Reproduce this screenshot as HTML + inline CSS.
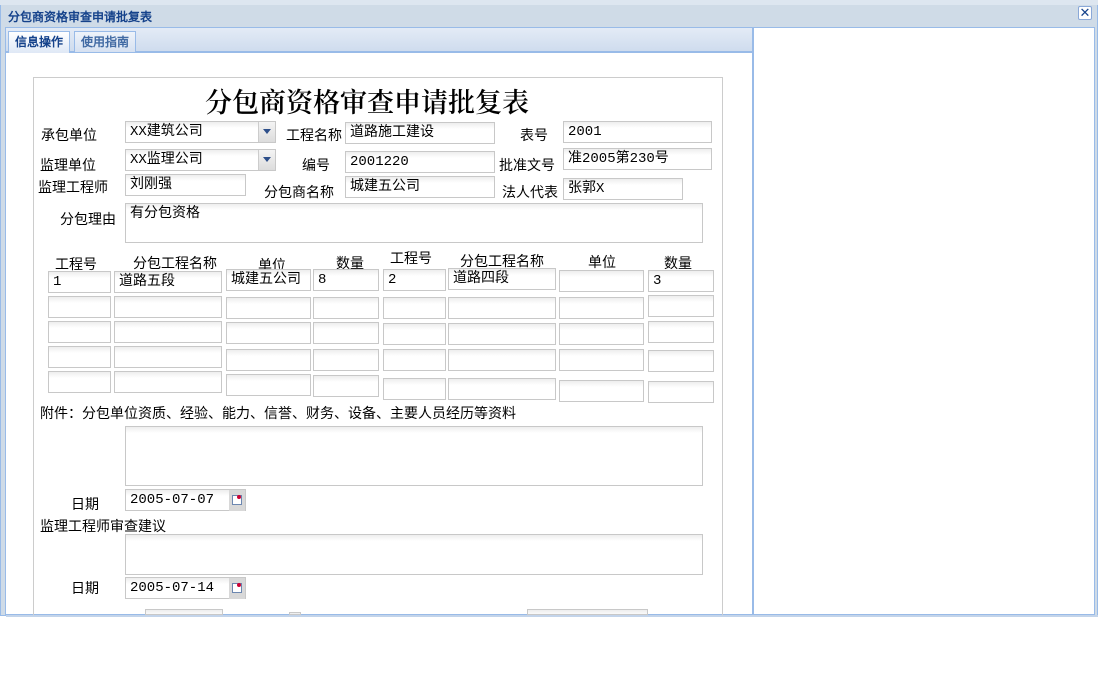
<!DOCTYPE html><html><head><meta charset="utf-8"><style>
*{margin:0;padding:0;box-sizing:border-box}
body{width:1098px;height:687px;background:#fff;position:relative;overflow:hidden;font-family:"Liberation Sans","WenQuanYi Zen Hei",sans-serif;font-size:14px;color:#000}
.a{position:absolute;white-space:nowrap}
.in{position:absolute;border:1px solid #c8c8c8;background:linear-gradient(#eee,#fff 6px);height:22px;padding:2px 4px;font-size:14px;line-height:16px;font-family:"Liberation Mono","WenQuanYi Zen Hei",monospace}
.sel:after{content:"";position:absolute;right:0;top:0;width:16px;height:20px;background:linear-gradient(#f4f4f4,#dcdcdc);border-left:1px solid #ccc}
.arr{position:absolute;right:4px;top:7px;width:0;height:0;border-left:4px solid transparent;border-right:4px solid transparent;border-top:5px solid #2d4f8a;z-index:2}
.cal{position:absolute;right:0;top:0;width:16px;height:21px;background:#d8d8d8}
.cal i{position:absolute;left:3px;top:5px;width:10px;height:10px;border:1px solid #6c87b0;background:#fff}
.cal b{position:absolute;right:4px;top:5px;width:4px;height:4px;border-radius:50%;background:#c03}
</style></head><body>
<div class="a" style="left:0;top:0;width:1098px;height:616px;background:#cfdbe7;border:1px solid #99bbe8"></div>
<div class="a" style="left:0;top:0;width:1098px;height:5px;background:#dde6f0"></div>
<div class="a" style="left:8px;top:8px;font-size:12px;font-weight:bold;color:#15428b">分包商资格审查申请批复表</div>
<div class="a" style="left:1078px;top:6px;width:14px;height:14px;border:1px solid #8aa8d8;background:#fff;border-radius:2px;color:#15428b;font-size:13px;line-height:11px;text-align:center">✕</div>
<div class="a" style="left:5px;top:27px;width:748px;height:588px;background:#fff;border:1px solid #99bbe8"></div>
<div class="a" style="left:6px;top:28px;width:746px;height:25px;background:linear-gradient(#e3ebf6,#cfdcee);border-bottom:2px solid #99bbe8"></div>
<div class="a" style="left:8px;top:31px;width:62px;height:22px;background:linear-gradient(#fff,#dfe8f6);border:1px solid #99bbe8;border-bottom:none;font-size:12px;font-weight:bold;color:#15428b;text-align:center;line-height:20px">信息操作</div>
<div class="a" style="left:74px;top:31px;width:62px;height:21px;background:linear-gradient(#eef3fa,#d6e1f1);border:1px solid #99bbe8;border-bottom:none;font-size:12px;font-weight:bold;color:#416aa3;text-align:center;line-height:20px">使用指南</div>
<div class="a" style="left:753px;top:27px;width:342px;height:588px;background:#fff;border:1px solid #99bbe8"></div>
<div class="a" style="left:33px;top:77px;width:690px;height:540px;border:1px solid #ccc;border-bottom:none"></div>
<div class="a" style="left:205px;top:81px;font-size:27px;font-family:'Noto Serif CJK SC',serif;font-weight:600">分包商资格审查申请批复表</div>

<div class="a" style="left:41px;top:125px">承包单位</div>
<div class="in sel" style="left:125px;top:121px;width:151px">XX建筑公司<span class="arr"></span></div>
<div class="a" style="left:286px;top:125px">工程名称</div>
<div class="in" style="left:345px;top:122px;width:150px">道路施工建设</div>
<div class="a" style="left:520px;top:125px">表号</div>
<div class="in" style="left:563px;top:121px;width:149px">2001</div>

<div class="a" style="left:40px;top:155px">监理单位</div>
<div class="in sel" style="left:125px;top:149px;width:151px">XX监理公司<span class="arr"></span></div>
<div class="a" style="left:302px;top:155px">编号</div>
<div class="in" style="left:345px;top:151px;width:150px">2001220</div>
<div class="a" style="left:499px;top:155px">批准文号</div>
<div class="in" style="left:563px;top:148px;width:149px">准2005第230号</div>

<div class="a" style="left:38px;top:177px">监理工程师</div>
<div class="in" style="left:125px;top:174px;width:121px">刘刚强</div>
<div class="a" style="left:264px;top:182px">分包商名称</div>
<div class="in" style="left:345px;top:176px;width:150px">城建五公司</div>
<div class="a" style="left:502px;top:182px">法人代表</div>
<div class="in" style="left:563px;top:178px;width:120px">张郭X</div>

<div class="a" style="left:60px;top:209px">分包理由</div>
<div class="in" style="left:125px;top:203px;width:578px;height:40px">有分包资格</div>

<div class="a" style="left:55px;top:254px">工程号</div>
<div class="a" style="left:133px;top:253px">分包工程名称</div>
<div class="a" style="left:258px;top:255px">单位</div>
<div class="a" style="left:336px;top:253px">数量</div>
<div class="a" style="left:390px;top:248px">工程号</div>
<div class="a" style="left:460px;top:251px">分包工程名称</div>
<div class="a" style="left:588px;top:252px">单位</div>
<div class="a" style="left:664px;top:253px">数量</div>

<div class="in" style="left:48px;top:271px;width:63px">1</div>
<div class="in" style="left:114px;top:271px;width:108px">道路五段</div>
<div class="in" style="left:226px;top:269px;width:85px">城建五公司</div>
<div class="in" style="left:313px;top:269px;width:66px">8</div>
<div class="in" style="left:383px;top:269px;width:63px">2</div>
<div class="in" style="left:448px;top:268px;width:108px">道路四段</div>
<div class="in" style="left:559px;top:270px;width:85px"></div>
<div class="in" style="left:648px;top:270px;width:66px">3</div>

<div class="in" style="left:48px;top:296px;width:63px"></div><div class="in" style="left:114px;top:296px;width:108px"></div><div class="in" style="left:226px;top:297px;width:85px"></div><div class="in" style="left:313px;top:297px;width:66px"></div><div class="in" style="left:383px;top:297px;width:63px"></div><div class="in" style="left:448px;top:297px;width:108px"></div><div class="in" style="left:559px;top:297px;width:85px"></div><div class="in" style="left:648px;top:295px;width:66px"></div>
<div class="in" style="left:48px;top:321px;width:63px"></div><div class="in" style="left:114px;top:321px;width:108px"></div><div class="in" style="left:226px;top:322px;width:85px"></div><div class="in" style="left:313px;top:322px;width:66px"></div><div class="in" style="left:383px;top:323px;width:63px"></div><div class="in" style="left:448px;top:323px;width:108px"></div><div class="in" style="left:559px;top:323px;width:85px"></div><div class="in" style="left:648px;top:321px;width:66px"></div>
<div class="in" style="left:48px;top:346px;width:63px"></div><div class="in" style="left:114px;top:346px;width:108px"></div><div class="in" style="left:226px;top:349px;width:85px"></div><div class="in" style="left:313px;top:349px;width:66px"></div><div class="in" style="left:383px;top:349px;width:63px"></div><div class="in" style="left:448px;top:349px;width:108px"></div><div class="in" style="left:559px;top:349px;width:85px"></div><div class="in" style="left:648px;top:350px;width:66px"></div>
<div class="in" style="left:48px;top:371px;width:63px"></div><div class="in" style="left:114px;top:371px;width:108px"></div><div class="in" style="left:226px;top:374px;width:85px"></div><div class="in" style="left:313px;top:375px;width:66px"></div><div class="in" style="left:383px;top:378px;width:63px"></div><div class="in" style="left:448px;top:378px;width:108px"></div><div class="in" style="left:559px;top:380px;width:85px"></div><div class="in" style="left:648px;top:381px;width:66px"></div>

<div class="a" style="left:40px;top:403px">附件：分包单位资质、经验、能力、信誉、财务、设备、主要人员经历等资料</div>
<div class="in" style="left:125px;top:426px;width:578px;height:60px"></div>

<div class="a" style="left:71px;top:494px">日期</div>
<div class="in" style="left:125px;top:489px;width:121px">2005-07-07<span class="cal"><i></i><b></b></span></div>
<div class="a" style="left:40px;top:516px">监理工程师审查建议</div>
<div class="in" style="left:125px;top:534px;width:578px;height:41px"></div>
<div class="a" style="left:71px;top:578px">日期</div>
<div class="in" style="left:125px;top:577px;width:121px">2005-07-14<span class="cal"><i></i><b></b></span></div>
<div class="in" style="left:145px;top:609px;width:78px;height:6px;padding:0"></div>
<div class="in" style="left:289px;top:612px;width:12px;height:3px;padding:0"></div>
<div class="in" style="left:527px;top:609px;width:121px;height:6px;padding:0"></div>
<div class="a" style="left:0;top:617px;width:1098px;height:70px;background:#fff"></div>
<div class="a" style="left:6px;top:615px;width:1092px;height:2px;background:#c3d4ea"></div>
</body></html>
